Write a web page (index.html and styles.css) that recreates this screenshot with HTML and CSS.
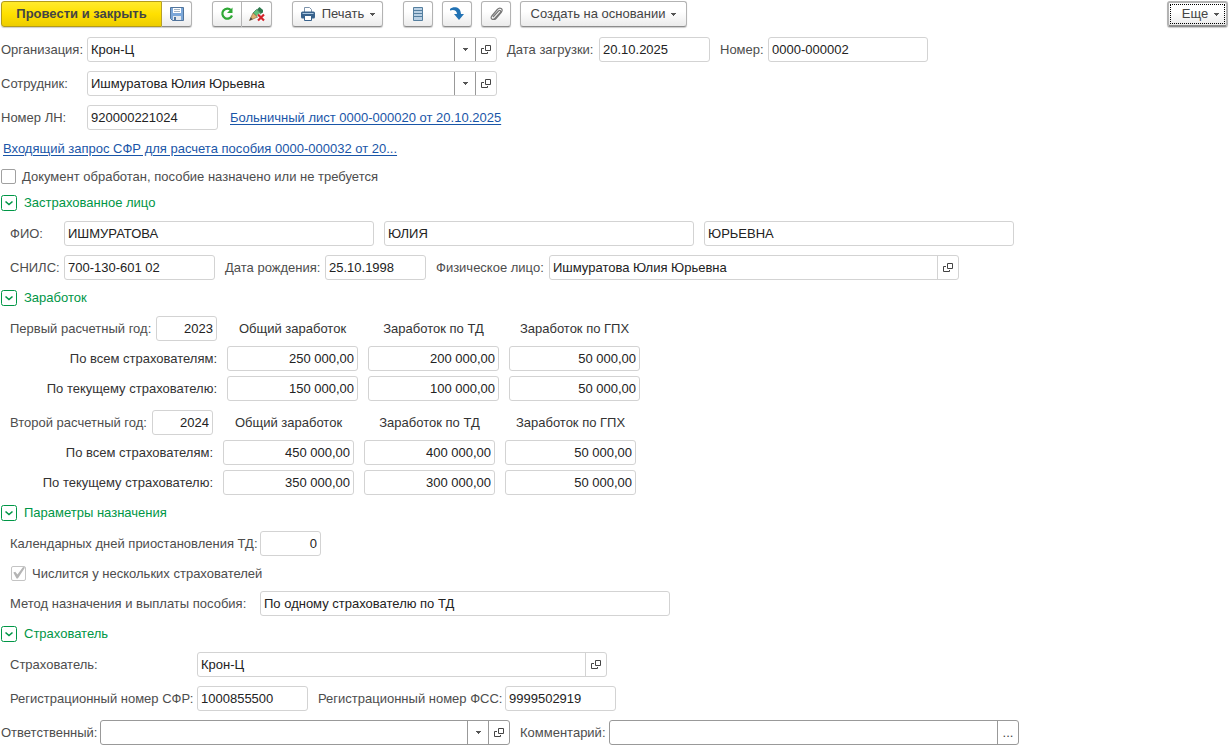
FILE: index.html
```html
<!DOCTYPE html>
<html lang="ru">
<head>
    <meta charset="UTF-8">
    <meta name="viewport" content="width=device-width, initial-scale=1.0">
    <title>Сведения для расчета пособия</title>

    <link rel="stylesheet" href="styles.css">
</head>
<body>

    <!-- shared icons -->
    <svg class="sprite" aria-hidden="true">
        <symbol id="icon-open" viewBox="0 0 10 10">
            <path d="M4.500 .5h5v5h-5zM3 3.500H.5v5h6V7" fill="none" stroke="#444"/>
        </symbol>
        <symbol id="icon-arrow" viewBox="0 0 5 3">
            <path d="M0 0h5v1H4v1H3v1H2V2H1V1H0z" fill="#555"/>
        </symbol>
        <symbol id="icon-toggle" viewBox="0 0 16 16">
            <rect x=".5" y=".5" width="15" height="15" rx="2" fill="#fff" stroke="#009646"/>
            <path d="M4.500 6.500L8 9.500l3.500-3" fill="none" stroke="#009646" stroke-width="1.600"/>
        </symbol>
    </svg>

    <form class="form">
        <div class="toolbar">
            <div class="btn_group">
                <button type="submit" class="btn primary">Провести и закрыть</button>
                <button type="button" class="btn icon_btn" aria-label="Записать">
                    <svg width="16" height="16" viewBox="0 0 16 16">
                        <path d="M1.500 1.500h13v13h-11l-2-2z" fill="#7ba7d9" stroke="#50749c"/>
                        <path d="M4 2h8v5H4z" fill="#fff"/>
                        <path d="M5 3.500h6M5 5.500h6" stroke="#a5b5c5"/>
                        <path d="M4 10h8v4H4z" fill="#e4e9ee"/>
                        <path d="M5 11h2v3H5z" fill="#50749c"/>
                    </svg>
                </button>
            </div>
            <div class="btn_group">
                <button type="button" class="btn icon_btn" aria-label="Перечитать">
                    <svg width="16" height="16" viewBox="0 0 16 16">
                        <path d="M12 4.200A5 5 0 1 0 13 9.500" fill="none" stroke="#2fa836" stroke-width="2.200"/>
                        <path d="M13.500 1.500v5.500H8z" fill="#2fa836"/>
                    </svg>
                </button>
                <button type="button" class="btn icon_btn" aria-label="Отменить проведение">
                    <svg width="16" height="16" viewBox="0 0 16 16">
                        <path d="M8 3.500L10.500 1 14 4v2.500l-2 1z" fill="#2c7a4d"/>
                        <path d="M7.500 3.500L12 7.500 8.500 11 4 7z" fill="#5fc27a" stroke="#39714f" stroke-width=".7"/>
                        <path d="M4 7l4.500 4L.5 14.500z" fill="#e0b070" stroke="#8c7047" stroke-width=".7"/>
                        <path d="M.5 14.500l1.200-3.300 2 2z" fill="#444"/>
                        <path d="M9 8.500l6 6M15 8.500l-6 6" stroke="#fff" stroke-width="3.600"/>
                        <path d="M9 8.500l6 6M15 8.500l-6 6" stroke="#d2232a" stroke-width="2.200"/>
                    </svg>
                </button>
            </div>
            <button type="button" class="btn print">
                <svg width="16" height="16" viewBox="0 0 16 16">
                    <path d="M4.500 6V1.500h5l2 2V6" fill="#fff" stroke="#7d93ab"/>
                    <rect x="1" y="5.500" width="14" height="7" rx="1.500" fill="#38628c"/>
                    <path d="M2.500 7.500h11" stroke="#a9c6e0"/>
                    <path d="M4.500 9.500h7v5h-7z" fill="#fff" stroke="#38628c"/>
                </svg>
                Печать
                <svg class="arrow"><use href="#icon-arrow"/></svg>
            </button>
            <div class="btn_row">
                <button type="button" class="btn icon_btn" aria-label="Движения документа">
                    <svg width="16" height="16" viewBox="0 0 16 16">
                        <path d="M3.500 1.500h9v13h-9z" fill="#b9d0e4" stroke="#557f9f"/>
                        <path d="M4 4.500h8M4 7.500h8M4 10.500h8" stroke="#557f9f"/>
                    </svg>
                </button>
                <button type="button" class="btn icon_btn" aria-label="Перейти">
                    <svg width="16" height="16" viewBox="0 0 16 16">
                        <path d="M1 3C4 .5 11.500 0 12 8h3l-5 6-5-6h3C8 4.500 4.500 3 1 4.500z" fill="#2272b4"/>
                    </svg>
                </button>
                <button type="button" class="btn icon_btn" aria-label="Присоединенные файлы">
                    <svg width="16" height="16" viewBox="0 0 16 16">
                        <path d="M5 11l5.500-6c1.500-1.500 3 0 1.800 1.500l-5.500 6c-2 2.200-5 0-3-2.500l5.500-6.500c2.500-3 6.500-.500 4.200 2.500l-5.500 6.500c-.7.8-1.500 1-2.500 1" fill="none" stroke="#777" stroke-width="1.200"/>
                    </svg>
                </button>
                <button type="button" class="btn create">
                    Создать на основании
                    <svg class="arrow"><use href="#icon-arrow"/></svg>
                </button>
            </div>
            <button type="button" class="btn more">
                Еще
                <svg class="arrow"><use href="#icon-arrow"/></svg>
            </button>
        </div>

        <div class="row">
            <div class="field">
                <label class="label_main" for="org">Организация:</label>
                <div class="combo dark_split">
                    <input type="text" id="org" value="Крон-Ц">
                    <button type="button" aria-label="Выбрать организацию"><svg class="arrow"><use href="#icon-arrow"/></svg></button>
                    <button type="button" aria-label="Открыть организацию"><svg class="open"><use href="#icon-open"/></svg></button>
                </div>
            </div>
            <div class="field">
                <label class="label_date" for="load_date">Дата загрузки:</label>
                <input class="input w_code" type="text" id="load_date" value="20.10.2025">
            </div>
            <div class="field">
                <label class="label_number" for="number">Номер:</label>
                <input class="input w_number" type="text" id="number" value="0000-000002">
            </div>
        </div>

        <div class="row">
            <div class="field">
                <label class="label_main" for="employee">Сотрудник:</label>
                <div class="combo dark_split">
                    <input type="text" id="employee" value="Ишмуратова Юлия Юрьевна">
                    <button type="button" aria-label="Выбрать сотрудника"><svg class="arrow"><use href="#icon-arrow"/></svg></button>
                    <button type="button" aria-label="Открыть сотрудника"><svg class="open"><use href="#icon-open"/></svg></button>
                </div>
            </div>
        </div>

        <div class="row">
            <div class="field">
                <label class="label_main" for="sick_number">Номер ЛН:</label>
                <input class="input w_sum" type="text" id="sick_number" value="920000221024">
            </div>
            <a class="link" href="#">Больничный лист 0000-000020 от 20.10.2025</a>
        </div>

        <div class="row link_row">
            <a class="link" href="#">Входящий запрос СФР для расчета пособия 0000-000032 от 20...</a>
        </div>

        <div class="row check_row">
            <input type="checkbox" id="processed">
            <label for="processed">Документ обработан, пособие назначено или не требуется</label>
        </div>

        <button type="button" class="section_title" aria-expanded="true">
            <svg class="toggle"><use href="#icon-toggle"/></svg>
            Застрахованное лицо
        </button>
        <div class="section">
            <div class="row">
                <div class="field">
                    <label class="label_person" for="surname">ФИО:</label>
                    <input class="input w_name" type="text" id="surname" value="ИШМУРАТОВА">
                </div>
                <input class="input w_name" type="text" aria-label="Имя" value="ЮЛИЯ">
                <input class="input w_name" type="text" aria-label="Отчество" value="ЮРЬЕВНА">
            </div>
            <div class="row">
                <div class="field">
                    <label class="label_person" for="snils">СНИЛС:</label>
                    <input class="input w_snils" type="text" id="snils" value="700-130-601 02">
                </div>
                <div class="field">
                    <label class="label_birth" for="birth">Дата рождения:</label>
                    <input class="input w_date" type="text" id="birth" value="25.10.1998">
                </div>
                <div class="field">
                    <label class="label_face" for="person">Физическое лицо:</label>
                    <div class="combo">
                        <input type="text" id="person" value="Ишмуратова Юлия Юрьевна">
                        <button type="button" aria-label="Открыть физическое лицо"><svg class="open"><use href="#icon-open"/></svg></button>
                    </div>
                </div>
            </div>
        </div>

        <button type="button" class="section_title" aria-expanded="true">
            <svg class="toggle"><use href="#icon-toggle"/></svg>
            Заработок
        </button>
        <div class="section">
            <table class="earnings first_year">
                <tr>
                    <td>
                        <div class="year">
                            <label for="year1">Первый расчетный год:</label>
                            <input class="input w_small" type="text" id="year1" value="2023">
                        </div>
                    </td>
                    <th scope="col">Общий заработок</th>
                    <th scope="col">Заработок по ТД</th>
                    <th scope="col">Заработок по ГПХ</th>
                </tr>
                <tr>
                    <th scope="row">По всем страхователям:</th>
                    <td><input class="input w_sum" type="text" aria-label="Общий заработок по всем, 2023" value="250 000,00"></td>
                    <td><input class="input w_sum" type="text" aria-label="Заработок по ТД по всем, 2023" value="200 000,00"></td>
                    <td><input class="input w_sum" type="text" aria-label="Заработок по ГПХ по всем, 2023" value="50 000,00"></td>
                </tr>
                <tr>
                    <th scope="row">По текущему страхователю:</th>
                    <td><input class="input w_sum" type="text" aria-label="Общий заработок по текущему, 2023" value="150 000,00"></td>
                    <td><input class="input w_sum" type="text" aria-label="Заработок по ТД по текущему, 2023" value="100 000,00"></td>
                    <td><input class="input w_sum" type="text" aria-label="Заработок по ГПХ по текущему, 2023" value="50 000,00"></td>
                </tr>
            </table>
            <table class="earnings second_year">
                <tr>
                    <td>
                        <div class="year">
                            <label for="year2">Второй расчетный год:</label>
                            <input class="input w_small" type="text" id="year2" value="2024">
                        </div>
                    </td>
                    <th scope="col">Общий заработок</th>
                    <th scope="col">Заработок по ТД</th>
                    <th scope="col">Заработок по ГПХ</th>
                </tr>
                <tr>
                    <th scope="row">По всем страхователям:</th>
                    <td><input class="input w_sum" type="text" aria-label="Общий заработок по всем, 2024" value="450 000,00"></td>
                    <td><input class="input w_sum" type="text" aria-label="Заработок по ТД по всем, 2024" value="400 000,00"></td>
                    <td><input class="input w_sum" type="text" aria-label="Заработок по ГПХ по всем, 2024" value="50 000,00"></td>
                </tr>
                <tr>
                    <th scope="row">По текущему страхователю:</th>
                    <td><input class="input w_sum" type="text" aria-label="Общий заработок по текущему, 2024" value="350 000,00"></td>
                    <td><input class="input w_sum" type="text" aria-label="Заработок по ТД по текущему, 2024" value="300 000,00"></td>
                    <td><input class="input w_sum" type="text" aria-label="Заработок по ГПХ по текущему, 2024" value="50 000,00"></td>
                </tr>
            </table>
        </div>

        <button type="button" class="section_title" aria-expanded="true">
            <svg class="toggle"><use href="#icon-toggle"/></svg>
            Параметры назначения
        </button>
        <div class="section tight">
            <div class="field">
                <label class="label_param" for="days">Календарных дней приостановления ТД:</label>
                <input class="input w_small right" type="text" id="days" value="0">
            </div>
            <div class="row check_row tall">
                <input type="checkbox" id="several" checked disabled>
                <label for="several">Числится у нескольких страхователей</label>
            </div>
            <div class="field">
                <label class="label_param" for="method">Метод назначения и выплаты пособия:</label>
                <input class="input w_full" type="text" id="method" value="По одному страхователю по ТД">
            </div>
        </div>

        <button type="button" class="section_title" aria-expanded="true">
            <svg class="toggle"><use href="#icon-toggle"/></svg>
            Страхователь
        </button>
        <div class="section">
            <div class="field">
                <label class="label_insurer" for="insurer">Страхователь:</label>
                <div class="combo">
                    <input type="text" id="insurer" value="Крон-Ц">
                    <button type="button" aria-label="Открыть страхователя"><svg class="open"><use href="#icon-open"/></svg></button>
                </div>
            </div>
            <div class="row">
                <div class="field">
                    <label class="label_insurer" for="sfr">Регистрационный номер СФР:</label>
                    <input class="input w_code" type="text" id="sfr" value="1000855500">
                </div>
                <div class="field">
                    <label class="label_insurer" for="fss">Регистрационный номер ФСС:</label>
                    <input class="input w_code" type="text" id="fss" value="9999502919">
                </div>
            </div>
        </div>

        <div class="row">
            <div class="field">
                <label class="label_footer" for="responsible">Ответственный:</label>
                <div class="combo dark">
                    <input type="text" id="responsible">
                    <button type="button" aria-label="Выбрать ответственного"><svg class="arrow"><use href="#icon-arrow"/></svg></button>
                    <button type="button" aria-label="Открыть ответственного"><svg class="open"><use href="#icon-open"/></svg></button>
                </div>
            </div>
            <div class="field">
                <label class="label_comment" for="comment">Комментарий:</label>
                <div class="combo dark">
                    <input type="text" id="comment">
                    <button type="button" aria-label="Редактировать комментарий">...</button>
                </div>
            </div>
        </div>
    </form>

</body>
</html>
```

FILE: styles.css
```css
* {
    box-sizing: border-box;
}
body {
    margin: 0;
    background-color: #fff;
    color: #4d4d4d;
}
body, input, button {
    font-family: "Liberation Sans", Arial, sans-serif;
    font-size: 13px;
    line-height: 16px;
}
button {
    color: #444;
    cursor: pointer;
}
svg {
    display: block;
    flex: none;
}
.sprite {
    position: absolute;
    width: 0;
    height: 0;
}
.arrow {
    width: 5px;
    height: 3px;
}
.open {
    width: 10px;
    height: 10px;
}
.toggle {
    width: 16px;
    height: 16px;
}
.form {
    display: flex;
    flex-direction: column;
    align-items: flex-start;
    gap: 9px;
    padding: 1px 1px 0;
}

/* toolbar */
.toolbar {
    display: flex;
    align-items: flex-start;
    align-self: stretch;
    gap: 20px;
    height: 27px;
}
.btn_group {
    display: flex;
}
.btn_row {
    display: flex;
    gap: 9px;
}
.btn {
    display: flex;
    align-items: center;
    justify-content: center;
    height: 26px;
    padding: 0;
    border: 1px solid #b3b3b3;
    border-bottom-color: #8c8c8c;
    border-radius: 3px;
    background: linear-gradient(#fff 40%, #ebebeb);
    box-shadow: 0 1px 1px #ccc;
    white-space: nowrap;
}
.icon_btn {
    width: 30px;
}
.btn_group .btn:first-child {
    border-radius: 3px 0 0 3px;
}
.btn_group .btn:last-child {
    border-left: 0;
    border-radius: 0 3px 3px 0;
}
.btn.primary {
    width: 161px;
    border-color: #b39b1a;
    background: linear-gradient(#ffea2e, #ffe000 50%, #edcd00);
    color: #444;
    font-weight: bold;
}
.print {
    width: 91px;
    gap: 6px;
}
.create {
    width: 167px;
    gap: 6px;
}
.more {
    width: 61px;
    gap: 6px;
    margin-left: auto;
    padding-left: 6px;
    border-width: 2px;
    outline: 1px dotted #000;
    outline-offset: -4px;
}

/* fields */
.row {
    display: flex;
    align-items: center;
    gap: 10px;
}
.field {
    display: flex;
    align-items: center;
}
label {
    flex: none;
    white-space: nowrap;
}
.label_main {
    width: 86px;
}
.label_date {
    width: 92px;
}
.label_number {
    width: 48px;
}
.label_person {
    width: 54px;
}
.label_birth {
    width: 100px;
}
.label_face {
    width: 113px;
}
.label_param {
    width: 250px;
}
.label_insurer {
    width: 187px;
}
.label_footer {
    width: 99px;
}
.label_comment {
    width: 89px;
}
.input, .combo {
    height: 25px;
    border: 1px solid #d3d3d3;
    border-radius: 3px;
    background-color: #fff;
}
.input {
    padding: 0 3px;
    color: #222;
}
.combo {
    display: flex;
    width: 410px;
}
.combo input {
    flex: 1;
    min-width: 0;
    padding: 0 3px;
    border: 0;
    background: none;
    color: #222;
}
.combo button {
    display: flex;
    align-items: center;
    justify-content: center;
    width: 21px;
    padding: 0;
    border: 0;
    border-left: 1px solid #d3d3d3;
    background: none;
}
.combo.dark_split button, .combo.dark button {
    border-left-color: #999;
}
.dark {
    border-color: #999;
}
.w_small {
    width: 61px;
}
.w_date {
    width: 101px;
}
.w_code {
    width: 111px;
}
.w_sum {
    width: 131px;
}
.w_snils {
    width: 151px;
}
.w_number {
    width: 160px;
}
.w_name {
    width: 310px;
}
.w_full {
    width: 410px;
}
.right {
    text-align: right;
}
.link {
    margin-left: 2px;
    color: #1a56a8;
    text-decoration: underline;
    text-underline-offset: 2px;
}
.link_row {
    height: 20px;
}

/* checkboxes */
.check_row {
    gap: 6px;
    height: 17px;
}
.tall {
    height: 25px;
    padding-left: 1px;
}
input[type="checkbox"] {
    appearance: none;
    width: 15px;
    height: 15px;
    margin: 0;
    border: 1px solid #a0a0a0;
    border-radius: 2px;
    background-color: #fff;
}
input[type="checkbox"]:disabled {
    border-color: #c4c4c4;
}
input[type="checkbox"]:checked::before {
    content: "";
    display: block;
    width: 13px;
    height: 12px;
    background-color: #b5b5b5;
    clip-path: polygon(10% 45%, 25% 40%, 42% 62%, 85% 0, 100% 5%, 45% 95%, 35% 95%);
}

/* sections */
.section_title {
    display: flex;
    align-items: center;
    gap: 7px;
    height: 18px;
    padding: 0;
    border: 0;
    background: none;
    color: #009646;
}
.section {
    display: flex;
    flex-direction: column;
    align-items: flex-start;
    gap: 9px;
    padding-left: 9px;
}
.section.tight {
    gap: 5px;
}

/* earnings */
.earnings {
    border-collapse: collapse;
}
.earnings th, .earnings td {
    height: 25px;
    padding: 0 0 5px 10px;
    color: #333;
    font-weight: normal;
    text-align: center;
}
.earnings tr:last-child > * {
    padding-bottom: 0;
}
.earnings tr > :first-child {
    padding-left: 0;
    text-align: right;
}
.earnings .input {
    display: block;
    text-align: right;
}
.year {
    display: flex;
    align-items: center;
    justify-content: space-between;
    color: #4d4d4d;
}
.first_year .year {
    width: 207px;
}
.second_year .year {
    width: 203px;
}
```
